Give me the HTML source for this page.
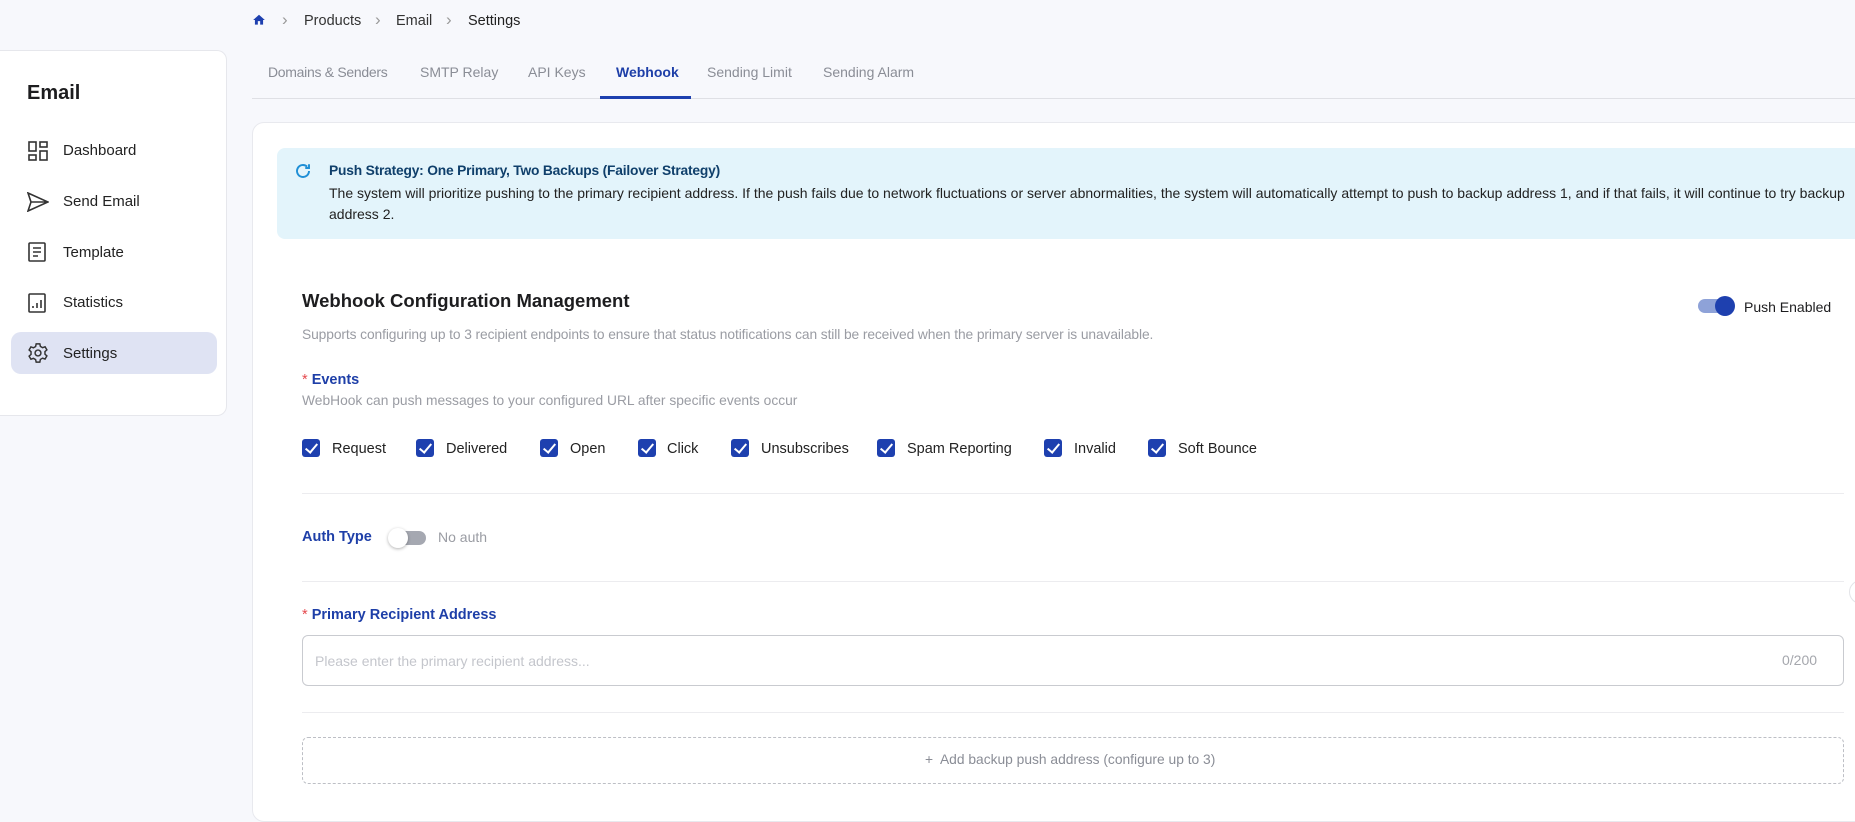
<!DOCTYPE html>
<html><head><meta charset="utf-8"><style>
*{box-sizing:border-box;margin:0;padding:0}
body{width:1855px;height:800px;overflow:hidden;background:#f7f8fc;font-family:"Liberation Sans",sans-serif;color:#1d1d1f;position:relative}
.a{position:absolute;white-space:nowrap}
.side{left:0;top:50px;width:227px;height:366px;background:#fff;border:1px solid #e6e7ec;border-left:none;border-radius:0 10px 10px 0}
.mi{font-size:15px;color:#222}
.tab{font-size:14px;color:#8a8d96;top:64px}
.card{left:252px;top:122px;width:1620px;height:700px;background:#fff;border:1px solid #e8e9ee;border-radius:12px}
.cb{width:18px;height:18px;background:#1e40af;border-radius:3px;top:439px}
.cb:after{content:"";position:absolute;left:6px;top:2px;width:5px;height:10px;border:solid #fff;border-width:0 2px 2px 0;transform:rotate(40deg)}
.cl{font-size:14.5px;top:441px;color:#222}
.hr{left:302px;width:1542px;height:1px;background:#ececef}
.blue{color:#1e3fa8;font-weight:bold;font-size:14.5px}
</style></head><body>
<svg class="a" style="left:252px;top:13px" width="14" height="14" viewBox="0 0 24 24"><path d="M10 20v-6h4v6h5v-8h3L12 3 2 12h3v8z" fill="#1e40af"/></svg>
<div class="a" style="left:282px;top:10px;font-size:17px;color:#999">&#x203A;</div>
<div class="a" style="left:304px;top:13px;font-size:14.5px;color:#333">Products</div>
<div class="a" style="left:375px;top:10px;font-size:17px;color:#999">&#x203A;</div>
<div class="a" style="left:396px;top:13px;font-size:14.5px;color:#333">Email</div>
<div class="a" style="left:446px;top:10px;font-size:17px;color:#999">&#x203A;</div>
<div class="a" style="left:468px;top:13px;font-size:14.5px;color:#222">Settings</div>

<div class="a side"></div>
<div class="a" style="left:27px;top:82px;font-size:20px;font-weight:bold">Email</div>
<svg class="a" style="left:28px;top:141px" width="20" height="20" viewBox="0 0 20 20" fill="none" stroke="#333" stroke-width="1.6"><rect x="1" y="1" width="7" height="9"/><rect x="12" y="1" width="7" height="5"/><rect x="1" y="14" width="7" height="5"/><rect x="12" y="10" width="7" height="9"/></svg>
<div class="a mi" style="left:63px;top:142px">Dashboard</div>
<svg class="a" style="left:27px;top:192px" width="22" height="20" viewBox="0 0 22 20" fill="none" stroke="#333" stroke-width="1.6"><path d="M1 1l20 9L1 19l3-9zM4 10h17"/></svg>
<div class="a mi" style="left:63px;top:193px">Send Email</div>
<svg class="a" style="left:28px;top:242px" width="18" height="20" viewBox="0 0 18 20" fill="none" stroke="#333" stroke-width="1.6"><rect x="1" y="1" width="16" height="18" rx="1"/><path d="M5 6h8M5 10h8M5 14h5"/></svg>
<div class="a mi" style="left:63px;top:244px">Template</div>
<svg class="a" style="left:28px;top:293px" width="18" height="20" viewBox="0 0 18 20" fill="none" stroke="#333" stroke-width="1.6"><rect x="1" y="1" width="16" height="18" rx="1"/><path d="M5 15v-2M9 15v-5M13 15v-8"/></svg>
<div class="a mi" style="left:63px;top:294px">Statistics</div>
<div class="a" style="left:11px;top:332px;width:206px;height:42px;background:#dfe3f3;border-radius:10px"></div>
<svg class="a" style="left:27px;top:342px" width="22" height="22" viewBox="0 0 24 24" fill="none" stroke="#333" stroke-width="1.6"><circle cx="12" cy="12" r="3.2"/><path d="M10 2h4l.6 2.8 2.4 1.4 2.7-1 2 3.4-2.1 1.9v2.8l2.1 1.9-2 3.4-2.7-1-2.4 1.4L14 22h-4l-.6-2.8-2.4-1.4-2.7 1-2-3.4 2.1-1.9V10.6L2.3 8.7l2-3.4 2.7 1 2.4-1.4z"/></svg>
<div class="a mi" style="left:63px;top:345px">Settings</div>

<div class="a tab" style="left:268px;letter-spacing:-0.3px">Domains &amp; Senders</div>
<div class="a tab" style="left:420px">SMTP Relay</div>
<div class="a tab" style="left:528px">API Keys</div>
<div class="a tab" style="left:616px;color:#1e3fa8;font-weight:bold">Webhook</div>
<div class="a tab" style="left:707px">Sending Limit</div>
<div class="a tab" style="left:823px">Sending Alarm</div>
<div class="a" style="left:252px;top:98px;width:1603px;height:1px;background:#dfe0e5"></div>
<div class="a" style="left:600px;top:96px;width:91px;height:3px;background:#1e40af"></div>

<div class="a card"></div>
<div class="a" style="left:277px;top:148px;width:1600px;height:91px;background:#e3f4fb;border-radius:8px"></div>
<svg class="a" style="left:294px;top:162px" width="18" height="18" viewBox="0 0 24 24" fill="none" stroke="#1f8fd6" stroke-width="2.6"><path d="M20 12a8 8 0 1 1-2.5-5.8M20 3v5h-5"/></svg>
<div class="a" style="left:329px;top:163px;font-size:13.8px;font-weight:bold;color:#0f3f6b;letter-spacing:-0.2px">Push Strategy: One Primary, Two Backups (Failover Strategy)</div>
<div class="a" style="left:329px;top:185px;font-size:14px;color:#222">The system will prioritize pushing to the primary recipient address. If the push fails due to network fluctuations or server abnormalities, the system will automatically attempt to push to backup address 1, and if that fails, it will continue to try backup</div>
<div class="a" style="left:329px;top:206px;font-size:14px;color:#222">address 2.</div>

<div class="a" style="left:302px;top:290px;font-size:18.5px;font-weight:bold">Webhook Configuration Management</div>
<div class="a" style="left:302px;top:327px;font-size:13.8px;color:#9a9ca3;letter-spacing:-0.1px">Supports configuring up to 3 recipient endpoints to ensure that status notifications can still be received when the primary server is unavailable.</div>
<div class="a" style="left:1698px;top:299px;width:34px;height:14px;background:#8ea2d8;border-radius:7px"></div>
<div class="a" style="left:1715px;top:296px;width:20px;height:20px;background:#1e40af;border-radius:50%"></div>
<div class="a" style="left:1744px;top:299px;font-size:14px">Push Enabled</div>

<div class="a" style="left:302px;top:372px;font-size:14.5px"><span style="color:#e5484d">*</span> <span class="blue">Events</span></div>
<div class="a" style="left:302px;top:393px;font-size:13.8px;color:#9a9ca3">WebHook can push messages to your configured URL after specific events occur</div>
<div class="a cb" style="left:302px"></div><div class="a cl" style="left:332px">Request</div>
<div class="a cb" style="left:416px"></div><div class="a cl" style="left:446px">Delivered</div>
<div class="a cb" style="left:540px"></div><div class="a cl" style="left:570px">Open</div>
<div class="a cb" style="left:638px"></div><div class="a cl" style="left:667px">Click</div>
<div class="a cb" style="left:731px"></div><div class="a cl" style="left:761px">Unsubscribes</div>
<div class="a cb" style="left:877px"></div><div class="a cl" style="left:907px">Spam Reporting</div>
<div class="a cb" style="left:1044px"></div><div class="a cl" style="left:1074px">Invalid</div>
<div class="a cb" style="left:1148px"></div><div class="a cl" style="left:1178px">Soft Bounce</div>
<div class="a hr" style="top:493px"></div>

<div class="a blue" style="left:302px;top:529px">Auth Type</div>
<div class="a" style="left:390px;top:531px;width:36px;height:14px;background:#a5a8b1;border-radius:7px"></div>
<div class="a" style="left:388px;top:528px;width:20px;height:20px;background:#fff;border-radius:50%;box-shadow:0 1px 3px rgba(0,0,0,.3)"></div>
<div class="a" style="left:438px;top:529px;font-size:14px;color:#9a9ca3">No auth</div>
<div class="a hr" style="top:581px"></div>

<div class="a" style="left:302px;top:607px;font-size:14.5px"><span style="color:#e5484d">*</span> <span class="blue">Primary Recipient Address</span></div>
<div class="a" style="left:302px;top:635px;width:1542px;height:51px;border:1px solid #c9cbd0;border-radius:6px"></div>
<div class="a" style="left:315px;top:653px;font-size:14px;color:#c4c6cc">Please enter the primary recipient address...</div>
<div class="a" style="left:1782px;top:652px;font-size:14px;color:#a5a7ad">0/200</div>
<div class="a hr" style="top:712px"></div>
<div class="a" style="left:302px;top:737px;width:1542px;height:47px;border:1px dashed #bdbfc5;border-radius:6px"></div>
<div class="a" style="left:925px;top:752px;font-size:13.8px;color:#8a8d96">+&nbsp; Add backup push address (configure up to 3)</div>
<div class="a" style="left:1849px;top:580px;width:24px;height:24px;border-radius:50%;background:#fff;border:1px solid #e3e4e8"></div>
</body></html>
